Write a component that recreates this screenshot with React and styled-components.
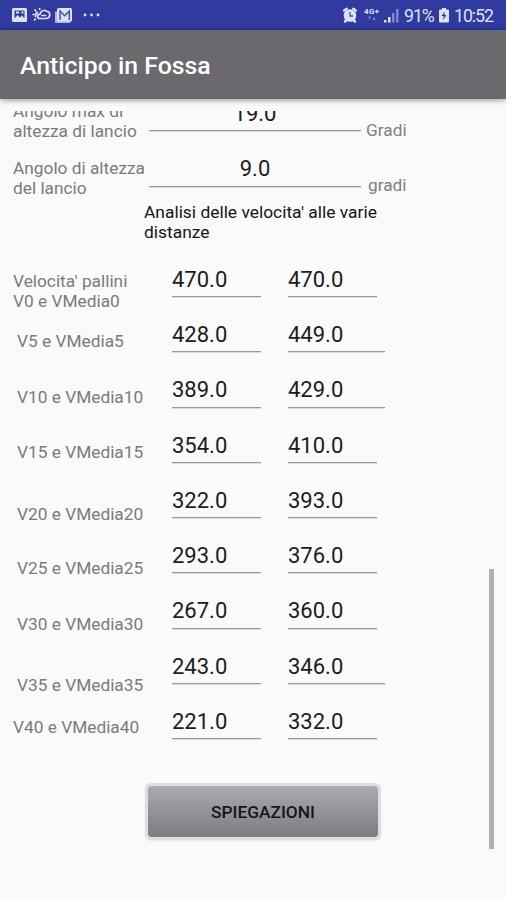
import * as React from 'react'
import styled, { createGlobalStyle } from 'styled-components'

const GlobalStyle = createGlobalStyle`
  body {
    margin: 0;
    background: #fafafa;
    font-family: Roboto, sans-serif;
  }
`;

const Screen = styled.div`
  position: relative;
  display: flex;
  flex-direction: column;
  width: 506px;
  height: 900px;
  overflow: hidden;
  background: #fafafa;
`;

const StatusBar = styled.div`
  display: flex;
  align-items: center;
  justify-content: space-between;
  height: 30px;
  padding: 0 11px;
  background: #303a9f;
  color: #dfe1f8;
`;

const StatusGroup = styled.div`
  display: flex;
  align-items: center;
`;

const StatusText = styled.span`
  width: ${props => props.$width}px;
  font-size: 17.8px;
  letter-spacing: -1.1px;
  line-height: 30px;
  margin-left: ${props => props.$gap}px;
  padding-top: 2px;
  white-space: nowrap;
`;

const AppBar = styled.header`
  display: flex;
  align-items: center;
  flex: none;
  height: 69px;
  padding-left: 20px;
  background: #6a696e;
  box-shadow: 0 1px 6px rgba(0, 0, 0, 0.42);
`;

const Title = styled.h1`
  margin: 0;
  padding-top: 1px;
  color: #fff;
  font-size: 24.8px;
  font-weight: 500;
`;

const Viewport = styled.main`
  flex: 1;
  margin-top: 12px;
  overflow: hidden;
`;

const Scrolled = styled.div`
  margin-top: -23px;
`;

const Row = styled.div`
  display: flex;
  align-items: flex-start;
  height: 55.25px;
`;

const Label = styled.div`
  flex: none;
  box-sizing: border-box;
  width: ${props => props.$width || 172}px;
  padding-top: ${props => props.$top}px;
  padding-left: ${props => props.$left || 13}px;
  color: #7b7b7b;
  font-size: 17.3px;
  line-height: 20px;
  white-space: pre-line;
`;

const Field = styled.div`
  flex: none;
  box-sizing: border-box;
  width: ${props => props.$width || 89}px;
  height: 43.25px;
  padding-top: 13px;
  margin-right: 27px;
  border-bottom: 1px solid #9a9a9a;
  box-shadow: 0 1px 0 #dcdcdc;
  color: #1c1c1c;
  font-size: 22px;
  line-height: 26px;
  text-align: ${props => props.$align || 'left'};
`;

const WideField = styled(Field)`
  margin-right: 5px;
`;

const Unit = styled.span`
  padding-top: 32px;
  padding-left: ${props => props.$left || 0}px;
  color: #808080;
  font-size: 17.3px;
  line-height: 20px;
`;

const SectionTitle = styled.p`
  box-sizing: border-box;
  height: 55.25px;
  margin: 0;
  padding: 3.5px 110px 0 144px;
  color: #151515;
  font-size: 17.4px;
  line-height: 20px;
`;

const Button = styled.button`
  display: block;
  width: 236px;
  height: 57px;
  margin: 32px 0 0 145px;
  padding: 0;
  border: 3px solid #dddde3;
  border-radius: 6px;
  background: linear-gradient(#aaaab2, #7c7b7e) padding-box;
  box-shadow: 0 1px 2px rgba(0, 0, 0, 0.08);
  color: #161616;
  font-family: inherit;
  font-size: 17.3px;
  font-weight: 500;
`;

const ScrollThumb = styled.div`
  position: absolute;
  top: 569px;
  left: 489px;
  width: 5px;
  height: 280px;
  background: #b0b0b0;
`;

const speeds = [
  { label: "Velocita' pallini\nV0 e VMedia0", v: '470.0', avg: '470.0', top: 17.25, left: 13 },
  { label: 'V5 e VMedia5', v: '428.0', avg: '449.0', top: 21.5, wide: true },
  { label: 'V10 e VMedia10', v: '389.0', avg: '429.0', top: 22.5, wide: true },
  { label: 'V15 e VMedia15', v: '354.0', avg: '410.0', top: 22.25 },
  { label: 'V20 e VMedia20', v: '322.0', avg: '393.0', top: 28.75 },
  { label: 'V25 e VMedia25', v: '293.0', avg: '376.0', top: 28 },
  { label: 'V30 e VMedia30', v: '267.0', avg: '360.0', top: 28.75 },
  { label: 'V35 e VMedia35', v: '243.0', avg: '346.0', top: 34.5, wide: true },
  { label: 'V40 e VMedia40', v: '221.0', avg: '332.0', top: 21, left: 13 },
]

const NotificationIcons = () => (
  <svg width="95" height="24" viewBox="0 0 95 24" fill="none">
    <path fill="#dfe1f8" fillRule="evenodd" d="M2.500 5h12q1.500 0 1.500 1.500v11q0 1.500-1.500 1.500h-12q-1.500 0-1.500-1.500v-11Q1 5 2.500 5zM3.500 7.500v8l3-3.500 2.500 2.500 2-2 2.500 3v-8zM5 8.500h3v2H5zM10.500 8.500h2v2h-2z" />
    <g stroke="#dfe1f8" strokeWidth="1.700" strokeLinecap="round">
      <path d="M29 15.500c-3 0-3.500-4 0-4.300C30 7 34.500 6.500 36 8.500c3.500 0 4 6.500-.5 7zM31 12.500h3.500" />
      <path d="M26.500 9.500q-2.500 1-2 4M24 7l.8 1M28.500 5.500l.3 1M22 11.500h.7M23.500 17l.8-.8" />
    </g>
    <path fill="#aeb4e6" d="M44 8.500h2v9.500h13.500v1q0 1-1 1H45q-1 0-1-1z" />
    <rect x="46" y="5" width="15" height="13.500" rx="1.500" fill="#dfe1f8" />
    <path stroke="#4650a8" strokeWidth="1.500" d="M49 17V8l4.700 4.700L58.300 8v9" />
    <g fill="#dfe1f8">
      <circle cx="74" cy="12" r="1.400" />
      <circle cx="80.500" cy="12" r="1.400" />
      <circle cx="87" cy="12" r="1.400" />
    </g>
  </svg>
)

const AlarmIcon = () => (
  <svg width="16" height="18" viewBox="0 0 16 18" fill="none">
    <circle cx="8" cy="9.500" r="6.300" fill="#dfe1f8" />
    <path stroke="#dfe1f8" strokeWidth="2.500" strokeLinecap="round" d="M2.200 4.500l2.500-1.700M13.800 4.500l-2.500-1.700M3 15.500l1.500-1.500M13 15.500l-1.500-1.500" />
    <path stroke="#4650a8" strokeWidth="1.300" d="M8 6v4h3" />
  </svg>
)

const NetworkIcon = () => (
  <svg width="16" height="18" viewBox="0 0 16 18">
    <text x="0" y="8" fill="#dfe1f8" fontFamily="Roboto, sans-serif" fontSize="8" fontWeight="700" textLength="15">4G+</text>
    <path fill="#7d85cc" d="M4 10.500h3L5.500 14zM8.500 14h3L10 10.500z" />
  </svg>
)

const SignalIcon = () => (
  <svg width="16" height="18" viewBox="0 0 16 18">
    <path fill="#dfe1f8" d="M0 14h2.500v2.500H0zM4 11h2.500v5.500H4z" />
    <path fill="#7d85cc" d="M8 7h2.500v9.500H8zM12 3h2.500v13.500H12z" />
  </svg>
)

const BatteryIcon = () => (
  <svg width="10" height="18" viewBox="0 0 10 18">
    <path fill="#dfe1f8" d="M3 2h4v1.500h2q1 0 1 1V15.500q0 1-1 1H1q-1 0-1-1v-11q0-1 1-1h2z" />
    <path fill="#303a9f" d="M5.800 5.500L2.500 10h2.200L4 14l3.500-5H5.300z" />
  </svg>
)

const IconSlot = styled.span`
  display: flex;
  margin-left: ${props => props.$gap}px;
`;

const App = () => {
  return (
    <Screen>
      <GlobalStyle />
      <StatusBar>
        <StatusGroup><NotificationIcons /></StatusGroup>
        <StatusGroup>
          <AlarmIcon />
          <IconSlot $gap={6}><NetworkIcon /></IconSlot>
          <IconSlot $gap={4}><SignalIcon /></IconSlot>
          <StatusText $gap={4} $width={29}>91%</StatusText>
          <IconSlot $gap={6}><BatteryIcon /></IconSlot>
          <StatusText $gap={5} $width={41}>10:52</StatusText>
        </StatusGroup>
      </StatusBar>
      <AppBar>
        <Title>Anticipo in Fossa</Title>
      </AppBar>
      <Viewport>
        <Scrolled>
          <Row>
            <Label $top={12.5} $width={149}>{'Angolo max di\naltezza di lancio'}</Label>
            <WideField $width={212} $align="center">19.0</WideField>
            <Unit>Gradi</Unit>
          </Row>
          <Row>
            <Label $top={14.5} $width={149}>{'Angolo di altezza\ndel lancio'}</Label>
            <WideField $width={212} $align="center">9.0</WideField>
            <Unit $left={2}>gradi</Unit>
          </Row>
          <SectionTitle>Analisi delle velocita' alle varie distanze</SectionTitle>
          {speeds.map(row => (
            <Row key={row.label}>
              <Label $top={row.top} $left={row.left || 17}>{row.label}</Label>
              <Field>{row.v}</Field>
              <Field $width={row.wide ? 97 : 89}>{row.avg}</Field>
            </Row>
          ))}
          <Button>SPIEGAZIONI</Button>
        </Scrolled>
      </Viewport>
      <ScrollThumb />
    </Screen>
  )
}

export default App
